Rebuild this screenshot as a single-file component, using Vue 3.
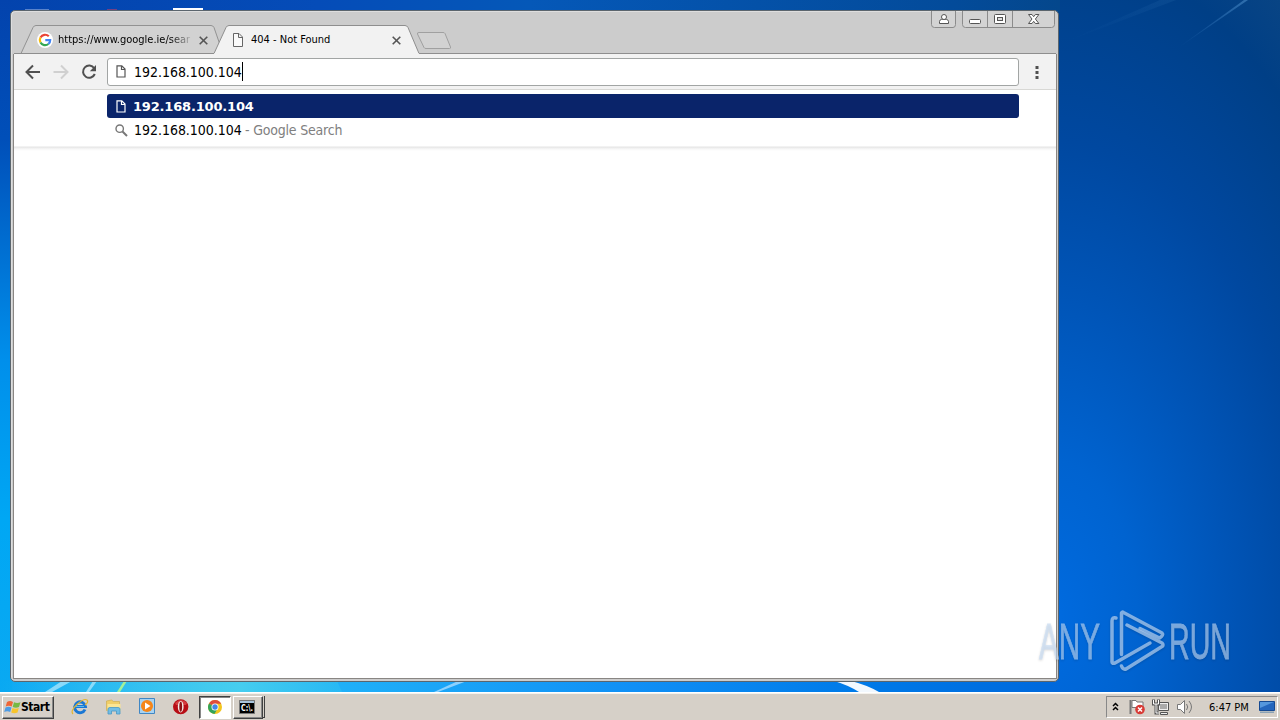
<template>
  <div class="desktop">
    <svg class="wallpaper" width="1280" height="692" viewBox="0 0 1280 692">
      <defs>
        <linearGradient id="ray" x1="0" y1="1" x2="1" y2="0">
          <stop offset="0" stop-color="#3a80c8" stop-opacity="0" />
          <stop offset="1" stop-color="#4a8cc8" stop-opacity=".6" />
        </linearGradient>
        <linearGradient id="glow">
          <stop offset="0" stop-color="#35c5ef" stop-opacity="0" />
          <stop offset=".7" stop-color="#4bd2ee" stop-opacity=".8" />
          <stop offset="1" stop-color="#35c5ef" stop-opacity=".4" />
        </linearGradient>
      </defs>
      <path d="M1175 50L1244 0h4Z" fill="url(#ray)" />
      <path d="M1065 42L1160 0h16Z" fill="url(#ray)" opacity=".2" />
      <path d="M0 692V681H337L342 692Z" fill="url(#glow)" />
      <path d="M45 692L62 681h10L52 692ZM86 692l7-11h4l-8 11Z" fill="#a5e4fb" opacity=".8" />
      <path d="M117 692l7-11h3l-7 11Z" fill="#a3f09a" />
      <path d="M434 692L458 681h9L438 692Z" fill="#a9dcff" opacity=".8" />
      <path d="M834 681h17q16 4 28 11h-20Q848 685 834 681Z" fill="#fff" opacity=".95" />
      <path d="M25 9.500h24" stroke="#7f9fd8" opacity=".7" />
      <path d="M107 9.500h10" stroke="#a34070" opacity=".7" />
      <path d="M173 9h30" stroke="#fff" stroke-width="2" />
    </svg>

    <main class="window">
      <header class="titlebar">
        <svg class="tab-shapes" width="1047" height="43" viewBox="11 11 1047 43">
          <path d="M21 53.500L33 27.500q1-2 3-2H211q2 0 3 2l9 26Z" fill="#d2d2d2" stroke="#929292" />
          <path d="M14 53.500H214L226 27.500q1-2 3-2H405q2 0 3 2l11 26H1056V55H14Z" fill="#f2f2f2" />
          <path d="M14 53.500H214L226 27.500q1-2 3-2H405q2 0 3 2l11 26H1056" fill="none" stroke="#8e8e8e" />
          <path d="M214.500 53.500H418.500" stroke="#f2f2f2" />
          <path d="M419 32.500h24q1.500 0 2 1l5.500 13.500q.5 1.500-1 1.500H426q-1.500 0-2-1L417.500 34q-.5-1.500 1.500-1.500Z" fill="#d2d2d2" stroke="#a0a0a0" />
        </svg>
        <div class="tab tab-google">
          <svg width="16" height="16" viewBox="0 0 16 16">
            <circle cx="8" cy="8" r="8" fill="#fff" />
            <g fill="none" stroke-width="2.200">
              <path d="M11.800 4.300A5.200 5.200 0 0 0 3.500 5.500" stroke="#ea4335" />
              <path d="M3.500 5.500A5.200 5.200 0 0 0 3.500 10.500" stroke="#fbbc05" />
              <path d="M3.500 10.500A5.200 5.200 0 0 0 11.400 12" stroke="#34a853" />
              <path d="M11.400 12A5 5 0 0 0 13.200 8.100H8.300" stroke="#4285f4" />
            </g>
          </svg>
          <span class="tab-title faded">https://www.google.ie/sear</span>
          <svg class="tab-close" width="9" height="9" viewBox="0 0 9 9"><path d="M.7.700l7.600 7.600M8.300.700L.7 8.300" /></svg>
        </div>
        <div class="tab tab-active">
          <svg width="16" height="16" viewBox="0 0 16 16">
            <path d="M3.500 1.500h5.500L12.500 5v9.500h-9ZM8.500 1.500v4h4" fill="#fafafa" stroke="#666" />
          </svg>
          <span class="tab-title">404 - Not Found</span>
          <svg class="tab-close" width="9" height="9" viewBox="0 0 9 9"><path d="M.7.700l7.600 7.600M8.300.700L.7 8.300" /></svg>
        </div>
        <svg class="controls" width="126" height="18" viewBox="930 11 126 18">
          <g fill="#d3d3d3" stroke="#8b8b8b">
            <path d="M931.500 11v13.500q0 3 3 3H953q2.500 0 2.500-3V11" />
            <path d="M962.500 11v13.500q0 3 3 3H1051.500q3 0 3-3V11M987.500 11v16.500M1012.500 11v16.500" />
          </g>
          <g fill="#fff" stroke="#555">
            <path d="M939.500 23.500v-2q0-1.700 2.200-2.200h4.600q2.200.5 2.200 2.200v2Z" />
            <circle cx="944" cy="17" r="2.500" />
            <rect x="969.500" y="19.500" width="11" height="4" rx="1" />
            <rect x="994.500" y="14.500" width="11" height="9" rx="1" />
            <rect x="997.500" y="17.500" width="5" height="3" fill="#ddd" />
            <path d="M1028.500 14.500h3.500l1.700 2.200 1.700-2.200h3.500l-3.500 4.500 3.500 4.500h-3.500l-1.700-2.200-1.700 2.200h-3.500l3.500-4.500Z" />
          </g>
        </svg>
      </header>

      <section class="toolbar">
        <svg class="nav" width="90" height="20" viewBox="20 62 90 20">
          <path d="M40 72H27.500M33 65.500L26.500 72l6.500 6.500" fill="none" stroke="#505050" stroke-width="2" />
          <path d="M53.500 72H66M61 65.500l6.500 6.500-6.500 6.500" fill="none" stroke="#d0d0d0" stroke-width="2" />
          <path d="M94.200 68.200A6.100 6.100 0 1 0 94.800 74" fill="none" stroke="#505050" stroke-width="2" />
          <path d="M96 65v6.200H89.800Z" fill="#505050" />
        </svg>
        <div class="omnibox">
          <svg class="page" width="10" height="13" viewBox="0 0 10 13"><path d="M1 .800h4.800L9 4v8H1ZM5.500 1v3.500H9" /></svg>
          <span class="address">192.168.100.104</span><i class="caret"></i>
        </div>
        <svg class="menu" width="4" height="14" viewBox="0 0 4 14">
          <path d="M.5 1h3v3h-3zM.5 6h3v3h-3zM.5 11h3v3h-3z" fill="#505050" />
        </svg>
      </section>

      <section class="suggestions">
        <div class="row selected">
          <svg class="page" width="10" height="13" viewBox="0 0 10 13"><path d="M1 .800h4.800L9 4v8H1ZM5.500 1v3.500H9" /></svg>
          <b>192.168.100.104</b>
        </div>
        <div class="row">
          <svg class="search" width="13" height="13" viewBox="0 0 13 13">
            <circle cx="4.700" cy="4.700" r="3.700" /><path d="M7.500 7.500l4.500 4.500" stroke-width="2" />
          </svg>
          <span class="address">192.168.100.104</span><span class="hint">- Google Search</span>
        </div>
      </section>
    </main>

    <svg class="watermark" width="210" height="72" viewBox="1030 605 210 72">
      <g class="mark-text">
        <text x="1039" y="659" textLength="61" lengthAdjust="spacingAndGlyphs">ANY</text>
        <text x="1169" y="659" textLength="62" lengthAdjust="spacingAndGlyphs">RUN</text>
      </g>
      <g fill="none" stroke="#c6dcf5" stroke-opacity=".65" stroke-width="3.500" stroke-linejoin="round" stroke-linecap="round">
        <path d="M1116 618q-4-1-4 3V662q0 2 3 1L1150 643" />
        <path d="M1121.500 654.500V613q.5-1.500 2-.5L1162 633q2 2-2.500 5L1140 628.500" />
        <path d="M1127 625L1162 643q2 2 0 3.500L1126 669q-3 1-4.500-3" />
      </g>
    </svg>

    <footer class="taskbar">
      <button class="start">
        <svg width="17" height="17" viewBox="0 0 17 17">
          <path d="M3 3q3-2 6 0L7.700 7.500q-3-1.500-6 0Z" fill="#ef6636" />
          <path d="M10 3.300q3 1.500 6.500 0L15 8q-3 1.500-6.300 0Z" fill="#77b943" />
          <path d="M1.500 8.500q3-1.500 6 0L6.200 13q-3-1.500-6 0Z" fill="#4d9ce5" />
          <path d="M8.500 9q3 1.500 6.300 0l-1.300 4.500q-3 1.500-6.300 0Z" fill="#f8c52c" />
        </svg>
        <span>Start</span>
      </button>
      <nav class="quick">
        <svg width="18" height="18" viewBox="0 0 18 18">
          <path d="M14 11.500A5.400 5.400 0 1 1 14.400 8.500H5" fill="none" stroke="#1b78d4" stroke-width="3" />
          <path d="M5 8.500h8" stroke="#59bdf3" stroke-width="1" />
          <path d="M2 16Q-1 13 6 6.500T16 2Q18 4 14 7" fill="none" stroke="#e5b52e" stroke-width="1.200" />
        </svg>
        <svg width="18" height="18" viewBox="0 0 18 18">
          <path d="M1.500 3l5-1 2 1.500h6v9h-13Z" fill="#f0ce68" stroke="#d0ad50" stroke-width=".7" />
          <path d="M2.500 6h13v7h-13Z" fill="#fbe594" />
          <path d="M3 16v-5q0-1.500 2-1.500h8q2 0 2 1.500v5H11.500v-3h-5v3Z" fill="#72bde4" stroke="#4a98c4" stroke-width=".8" />
        </svg>
        <svg width="18" height="18" viewBox="0 0 18 18">
          <path d="M1.500.500h15v15h-15Z" fill="#a8d3f2" stroke="#4087c4" />
          <circle cx="9" cy="8" r="6" fill="#f58619" /><path d="M7 4.500L12.500 8 7 11.500Z" fill="#fff" />
        </svg>
        <svg width="18" height="18" viewBox="0 0 18 18">
          <ellipse cx="8.700" cy="8.700" rx="7.700" ry="7.500" fill="#b70d15" />
          <path d="M3 5q6-6 12 0l-1 2H4Z" fill="#e85b5b" opacity=".6" />
          <ellipse cx="8.700" cy="8.700" rx="2.900" ry="5.800" fill="#f3e8e4" /><ellipse cx="8.700" cy="8.700" rx="1.400" ry="5" fill="#8a1014" />
        </svg>
      </nav>
      <button class="task pressed">
        <svg width="16" height="16" viewBox="0 0 16 16">
          <circle cx="8" cy="8" r="7" fill="#f2c51d" />
          <path d="M8 8L2 4.400A7 7 0 0 1 14.200 4.700H8Z" fill="#df4b3d" />
          <path d="M8 8L2 4.400A7 7 0 0 0 7.500 15l2.800-5Z" fill="#33a45a" />
          <circle cx="8" cy="8" r="3.500" fill="#fff" /><circle cx="8" cy="8" r="2.700" fill="#4387e8" />
        </svg>
      </button>
      <button class="task console">
        <svg width="16" height="14" viewBox="0 0 16 14">
          <path d="M.5.500h15v13H.5Z" fill="#000" stroke="#777" /><path d="M1 1h14v2H1Z" fill="#a9c4dc" />
          <text x="2" y="10.500" font-size="8" font-weight="bold" textLength="12" lengthAdjust="spacingAndGlyphs" fill="#fff">C:\.</text>
        </svg>
      </button>
      <i class="stack-edge"></i>
      <section class="tray">
        <svg class="tray-icons" width="90" height="22" viewBox="1107 696 90 22">
          <path d="M1113 706l2.500-2.500 2.500 2.500M1113 710l2.500-2.500 2.500 2.500" fill="none" stroke="#000" stroke-width="1.500" />
          <path d="M1130.500 700v14" stroke="#777" stroke-width="2" />
          <path d="M1132 700.500h4l1 1.500h6v7h-6l-1-1.500h-4Z" fill="#fff" stroke="#777" />
          <circle cx="1140" cy="709.500" r="4.800" fill="#d83a35" />
          <path d="M1138 707.500l4 4M1142 707.500l-4 4" stroke="#fff" stroke-width="1.500" />
          <path d="M1158.500 702.500h10v8h-10Z" fill="#eee" stroke="#555" />
          <path d="M1160 704h7v5h-7Z" fill="#aaa" />
          <path d="M1160.500 712.500h7v2h-7Z" fill="#eee" stroke="#555" />
          <path d="M1153.500 699.500v4.500h5v-4.500M1156 704v9h3" fill="none" stroke="#555" stroke-width="3" />
          <path d="M1153.500 700v4h5v-4M1156 704v9h3" fill="none" stroke="#fff" />
          <path d="M1177.500 704.500h3l4-4v13l-4-4h-3Z" fill="#fff" stroke="#777" />
          <path d="M1186.500 704q2.500 3 0 6M1189 701q5 6 0 12" fill="none" stroke="#777" />
        </svg>
        <span class="clock">6:47 PM</span>
        <svg width="16" height="14" viewBox="0 0 16 14">
          <path d="M.5 1.500h15v9H.5Z" fill="#2466bd" stroke="#164a92" />
          <path d="M1 2h14L1 8Z" fill="#5597dd" /><path d="M1 11.500h14v1.500H1Z" fill="#8ba2b5" />
        </svg>
      </section>
    </footer>
  </div>
</template>

<script setup>
</script>

<style>
body {
  margin: 0;
  overflow: hidden;
}
</style>

<style scoped>
.desktop {
  position: relative;
  width: 1280px;
  height: 720px;
  overflow: hidden;
  font-family: 'DejaVu Sans Condensed', 'DejaVu Sans', sans-serif;
  font-stretch: condensed;
  color: #000;
  background:
    linear-gradient(#0343ad, #004fb9 20%, #008feb 52%, #00a7f4 75%, #0aa9f2) 0 0 / 12px 692px no-repeat,
    linear-gradient(90deg, #0343ad, #054cb8 30%, #0558b8 50%, #034b9a 90%, #04478c) 0 0 / 1060px 12px no-repeat,
    linear-gradient(90deg, #0ca8f4, #35bdf0 20%, #20b0f8 32%, #108ff5 60%, #007be9 80%, #0068dc) 0 680px / 1060px 12px no-repeat,
    radial-gradient(ellipse 350px 640px at 1050px 620px, #006be0, #0063d0 25%, #0055b8 50%, #0048a0 75%, #003f86 105%, #124a82 130%);
}

.wallpaper {
  position: absolute;
  left: 0;
  top: 0;
}

.window {
  position: absolute;
  left: 10px;
  top: 10px;
  box-sizing: border-box;
  width: 1049px;
  height: 672px;
  border: 1px solid #5b656d;
  border-radius: 5px;
  background: #ccc;
  box-shadow: inset 1px 1px #dedede;
}

.window::after {
  content: '';
  position: absolute;
  left: 2px;
  top: 43px;
  width: 1042px;
  height: 624px;
  border: 1px solid #898683;
  border-top: 0;
  pointer-events: none;
}

.titlebar {
  position: relative;
  display: flex;
  height: 43px;
}

.tab-shapes {
  position: absolute;
  left: 0;
  top: 0;
}

.tab {
  position: relative;
  display: flex;
  align-items: center;
  height: 16px;
  margin-top: 21px;
  font-size: 11px;
}

.tab-google {
  width: 173px;
  margin-left: 26px;
}

.tab-active {
  width: 172px;
  margin-left: 20px;
}

.tab-title {
  width: 134px;
  margin: -2px 7px 0 5px;
  overflow: hidden;
  white-space: nowrap;
}

.faded {
  mask-image: linear-gradient(90deg, #000 112px, transparent 136px);
}

.tab-close {
  flex: none;
  fill: none;
  stroke: #555;
  stroke-width: 1.6;
}

.controls {
  position: absolute;
  left: 919px;
  top: 0;
}

.toolbar {
  display: flex;
  align-items: center;
  height: 35px;
  margin: 0 2px 0 3px;
  border-bottom: 1px solid #d8d8d5;
  background: #f2f2f2;
}

.nav {
  width: 90px;
  margin: 0 -3px 0 6px;
}

.omnibox {
  display: flex;
  align-items: center;
  box-sizing: border-box;
  width: 912px;
  height: 28px;
  padding-left: 8px;
  border: 1px solid #a2a5a4;
  border-radius: 3px;
  background: #fff;
}

.page {
  fill: none;
  stroke: #555;
  stroke-width: 1.2;
}

.address {
  width: 108px;
  margin-left: 8px;
  font-size: 14px;
  letter-spacing: -.03px;
  white-space: nowrap;
}

.caret {
  width: 1px;
  height: 19px;
  background: #000;
}

.menu {
  margin-left: 16px;
}

.suggestions {
  box-sizing: border-box;
  height: 588px;
  margin: 0 2px 0 3px;
  padding: 4px 0 0 93px;
  background: linear-gradient(#fff 56px, #e5e5e5 57px, #f7f7f7 59px, #fff 61px);
}

.row {
  display: flex;
  align-items: center;
  box-sizing: border-box;
  width: 912px;
  height: 24px;
  padding-left: 9px;
  border-radius: 3px;
  font-size: 14px;
}

.selected {
  background: #0a246a;
  color: #fff;
}

.selected .page {
  stroke: #fff;
}

.selected b {
  margin-left: 7px;
  font-family: 'DejaVu Sans', sans-serif;
  font-size: 13px;
  font-stretch: normal;
  letter-spacing: -.18px;
}

.search {
  margin: 0 -2px 0 -1px;
  fill: none;
  stroke: #777;
  stroke-width: 1.4;
}

.hint {
  margin-left: 3px;
  color: #808080;
  letter-spacing: -.2px;
}

.watermark {
  position: absolute;
  left: 1030px;
  top: 605px;
  overflow: visible;
  filter: drop-shadow(0 1px 1px rgba(0, 0, 0, .22));
}

.mark-text {
  font-family: 'Liberation Sans', sans-serif;
  font-size: 50px;
  fill: #c6dcf5;
  stroke: #c6dcf5;
  stroke-width: .8px;
  opacity: .62;
}

.taskbar {
  position: absolute;
  left: 0;
  top: 692px;
  display: flex;
  align-items: center;
  box-sizing: border-box;
  width: 1280px;
  height: 28px;
  padding: 1px 2px 0;
  border-top: 1px solid #fff;
  background: #d6d0c8;
  box-shadow: inset 0 1px #f5f2ed;
}

.start,
.task {
  display: flex;
  align-items: center;
  box-sizing: border-box;
  height: 23px;
  border: 1px solid;
  border-color: #fff #404040 #404040 #fff;
  background: #d6d0c8;
  box-shadow: inset -1px -1px #888;
  font-family: inherit;
}

.start {
  width: 52px;
  padding: 0 0 0 1px;
  font-size: 12px;
  font-weight: bold;
  font-stretch: condensed;
  letter-spacing: -.45px;
  color: #000;
}

.quick {
  display: flex;
  gap: 15.7px;
  margin: 0 9px 0 17px;
}

.task {
  justify-content: center;
  width: 30px;
  padding: 0;
}

.console {
  padding-right: 2px;
}

.pressed {
  width: 32px;
  margin-right: 2px;
  padding-right: 1px;
  border-color: #404040 #fff #fff #404040;
  background: #fff;
  box-shadow: inset 1px 1px #888;
}

.stack-edge {
  width: 1px;
  height: 21px;
  border-right: 1px solid #404040;
  border-bottom: 1px solid #404040;
}

.tray {
  display: flex;
  align-items: center;
  box-sizing: border-box;
  width: 172px;
  height: 22px;
  margin-left: auto;
  border: 1px solid;
  border-color: #888 #fff #fff #888;
}

.clock {
  width: 50px;
  margin-left: 12px;
  font-size: 11px;
  letter-spacing: 0;
  white-space: nowrap;
}
</style>
